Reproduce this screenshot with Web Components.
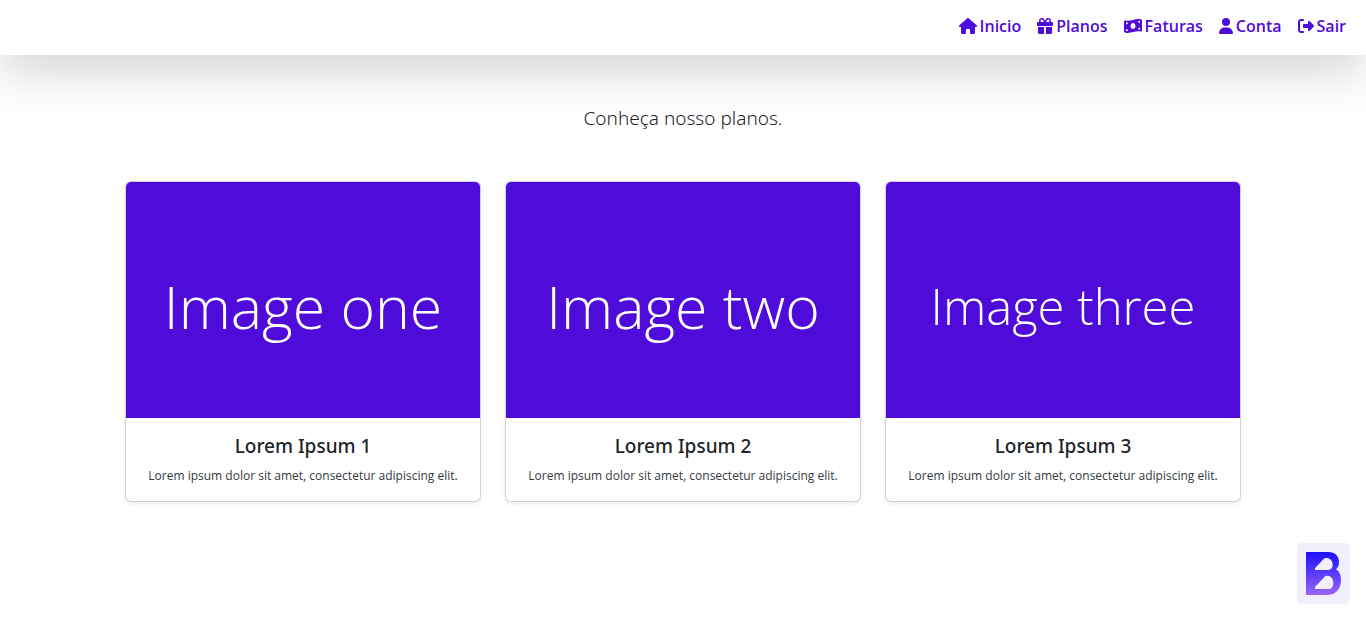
<!DOCTYPE html>
<html lang="pt-BR">
<head>
<meta charset="utf-8">
<meta name="viewport" content="width=device-width, initial-scale=1">
<title>Planos</title>
<style>
  body {
    margin: 0;
    background: #fff;
    color: #212529;
    font: 16px/24px "Noto Sans", "Open Sans", sans-serif;
    --brand: #4f0bd9;
  }
</style>
</head>
<body>
<plans-page></plans-page>

<script>
const icons = {
  home: [576, 18, 'M575.8 255.5c0 18-15 32.1-32 32.1h-32l.7 160.2c0 2.7-.2 5.4-.5 8.1V472c0 22.1-17.9 40-40 40H456c-1.1 0-2.2 0-3.3-.1c-1.4 .1-2.8 .1-4.2 .1H416 392c-22.1 0-40-17.9-40-40V448 384c0-17.7-14.3-32-32-32H256c-17.7 0-32 14.3-32 32v64 24c0 22.1-17.9 40-40 40H160 128.1c-1.5 0-3-.1-4.5-.2c-1.2 .1-2.4 .2-3.6 .2H104c-22.1 0-40-17.9-40-40V360c0-.9 0-1.9 .1-2.8V287.6H32c-18 0-32-14-32-32.1c0-9 3-17 10-24L266.4 8c7-7 15-8 22-8s15 2 21 7L564.8 231.5c8 7 12 15 11 24z'],
  gift: [512, 16, 'M190.5 68.8L225.3 128H224 152c-22.1 0-40-17.9-40-40s17.9-40 40-40h2.2c14.9 0 28.8 7.9 36.3 20.8zM64 88c0 14.4 3.5 28 9.6 40H32c-17.7 0-32 14.3-32 32v64c0 17.7 14.3 32 32 32H480c17.7 0 32-14.3 32-32V160c0-17.7-14.3-32-32-32H438.4c6.1-12 9.6-25.6 9.6-40c0-48.6-39.4-88-88-88h-2.2c-31.9 0-61.5 16.9-77.7 44.4L256 85.5l-24.1-41C215.7 16.9 186.1 0 154.2 0H152C103.4 0 64 39.4 64 88zm336 0c0 22.1-17.9 40-40 40H288h-1.3l34.8-59.2C329.1 55.9 342.9 48 357.8 48H360c22.1 0 40 17.9 40 40zM32 288V464c0 26.5 21.5 48 48 48H224V288H32zM288 512H432c26.5 0 48-21.5 48-48V288H288V512z'],
  bill: [576, 18, 'M0 112.5V422.3c0 18 10.1 35 27 41.3c87 32.5 174 10.3 261-11.9c79.8-20.3 159.6-40.7 239.3-18.9c23 6.3 48.7-9.5 48.7-33.4V89.7c0-18-10.1-35-27-41.3C462 15.9 375 38.1 288 60.3C208.2 80.6 128.4 100.9 48.7 79.1C25.6 72.8 0 88.6 0 112.5zM288 352c-44.2 0-80-43-80-96s35.8-96 80-96s80 43 80 96s-35.8 96-80 96zM64 352c35.3 0 64 28.7 64 64H64V352zm64-208c0 35.3-28.7 64-64 64V144h64zM512 304v64H448c0-35.3 28.7-64 64-64zM448 96h64v64c-35.3 0-64-28.7-64-64z'],
  user: [448, 14, 'M224 256A128 128 0 1 0 224 0a128 128 0 1 0 0 256zm-45.7 48C79.8 304 0 383.8 0 482.3C0 498.7 13.3 512 29.7 512H418.3c16.4 0 29.7-13.3 29.7-29.7C448 383.8 368.2 304 269.7 304H178.3z'],
  exit: [512, 16, 'M377.9 105.9L500.7 228.7c7.2 7.2 11.3 17.1 11.3 27.3s-4.1 20.1-11.3 27.3L377.9 406.1c-6.4 6.4-15 9.9-24 9.9c-18.7 0-33.9-15.2-33.9-33.9l0-62.1-128 0c-17.7 0-32-14.3-32-32l0-64c0-17.7 14.3-32 32-32l128 0 0-62.1c0-18.7 15.2-33.9 33.9-33.9c9 0 17.6 3.6 24 9.9zM160 96L96 96c-17.7 0-32 14.3-32 32l0 256c0 17.7 14.3 32 32 32l64 0c17.7 0 32 14.3 32 32s-14.3 32-32 32l-64 0c-53 0-96-43-96-96L0 128C0 75 43 32 96 32l64 0c17.7 0 32 14.3 32 32s-14.3 32-32 32z']
};

class Base extends HTMLElement {
  connectedCallback() {
    if (!this.shadowRoot) this.attachShadow({ mode: 'open' }).innerHTML = this.view();
  }
}

customElements.define('nav-link', class extends Base {
  view() {
    const [box, width, path] = icons[this.getAttribute('icon')];
    return `<style>
      :host { display: block; }
      a { display: flex; align-items: center; gap: 3px; color: var(--brand);
          font-family: "Open Sans", sans-serif; font-size: 16px; font-weight: 600; line-height: 24px; text-decoration: none; }
      svg { display: block; height: 16px; fill: currentColor; }
    </style>
    <a href="#"><svg width="${width}" viewBox="0 0 ${box} 512" aria-hidden="true"><path d="${path}"/></svg><span><slot></slot></span></a>`;
  }
});

customElements.define('site-header', class extends Base {
  view() {
    return `<style>
      :host { display: block; background: #fff; box-shadow: 0 16px 48px rgba(0, 0, 0, .175); }
      nav { display: flex; justify-content: flex-end; gap: 16px; padding: 14px 20px 17px; }
    </style>
    <nav><slot></slot></nav>`;
  }
});

customElements.define('plan-card', class extends Base {
  view() {
    return `<style>
      :host { display: flex; flex-direction: column; min-width: 0; overflow: hidden;
              background: #fff; border: 1px solid rgba(0, 0, 0, .175); border-radius: 6px;
              box-shadow: 0 2px 4px rgba(0, 0, 0, .075); text-align: center; }
      .cover { display: flex; align-items: center; justify-content: center; aspect-ratio: 3 / 2;
               box-sizing: border-box; padding-top: 12px;
               background: var(--brand); color: #fff; white-space: nowrap;
               font-family: "Open Sans", sans-serif; font-weight: 300; font-size: 59px; line-height: 72px; }
      :host([long]) .cover { font-size: 49px; }
      .body { padding: 16px; }
      h5 { margin: 0 0 8px; font-size: 19px; line-height: 24px; font-weight: 500; }
      p { margin: 0; font-family: "Open Sans", sans-serif; font-size: 12px; line-height: 19px; font-weight: 400; color: #343a40; }
    </style>
    <div class="cover"><slot name="cover"></slot></div>
    <div class="body"><h5><slot name="title"></slot></h5><p><slot></slot></p></div>`;
  }
});

customElements.define('brand-badge', class extends Base {
  view() {
    return `<style>
      :host { position: fixed; right: 16px; bottom: 15px; }
      a { display: block; padding: 9px; background: #f1effb; border-radius: 5px; }
      svg { display: block; }
    </style>
    <a href="#" aria-label="B"><svg width="35" height="43" viewBox="60 51 105 129" aria-hidden="true">
      <defs><linearGradient id="g" x1="0" y1="0" x2="0" y2="1"><stop offset="0" stop-color="#1d0fff"/><stop offset="1" stop-color="#9766f8"/></linearGradient></defs>
      <path fill="url(#g)" fill-rule="evenodd" d="M60 51H127C147 51 159 63 159 81C159 91 156 98 150 103C160 109 165 120 165 134C165 163 149 180 122 180H60ZM87 105H125C134 105 140 99 140 89C140 76 131 69 120 69C117 69 115 70 112 73L87 100ZM87 162H128C137 162 142 154 142 144C142 131 135 122 123 122C119 122 116 124 113 128L87 156Z"/>
    </svg></a>`;
  }
});

customElements.define('plans-page', class extends Base {
  view() {
    const card = (n, name, attr = '') => `<plan-card ${attr}><span slot="cover">Image ${name}</span><span slot="title">Lorem Ipsum ${n}</span>Lorem ipsum dolor sit amet, consectetur adipiscing elit.</plan-card>`;
    return `<style>
      :host { display: block; }
      main { max-width: 1116px; margin: 0 auto; padding: 48px 12px; }
      .lead { margin: 0 0 48px; text-align: center; font-size: 19px; line-height: 30px; font-weight: 300; }
      .plans { display: grid; grid-template-columns: repeat(auto-fit, minmax(300px, 1fr)); gap: 24px; }
    </style>
    <site-header>
      <nav-link icon="home">Inicio</nav-link>
      <nav-link icon="gift">Planos</nav-link>
      <nav-link icon="bill">Faturas</nav-link>
      <nav-link icon="user">Conta</nav-link>
      <nav-link icon="exit">Sair</nav-link>
    </site-header>
    <main>
      <p class="lead">Conheça nosso planos.</p>
      <section class="plans">${card(1, 'one')}${card(2, 'two')}${card(3, 'three', 'long')}</section>
    </main>
    <brand-badge></brand-badge>`;
  }
});
</script>
</body>
</html>
